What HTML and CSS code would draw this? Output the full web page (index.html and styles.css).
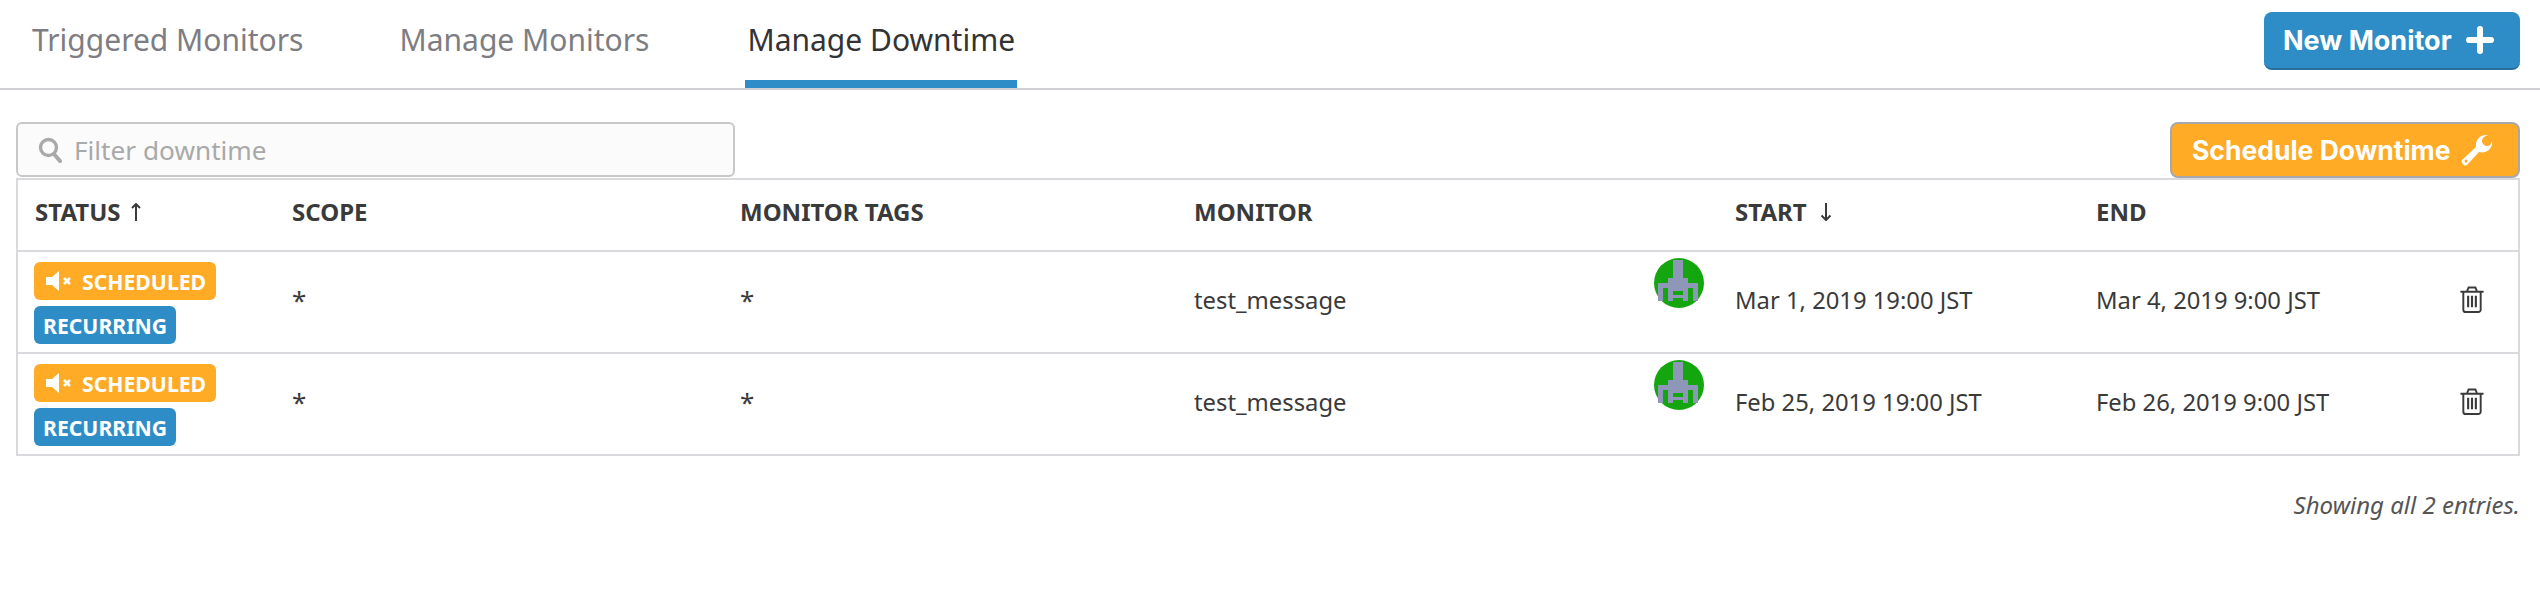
FILE: index.html
```html
<!DOCTYPE html>
<html lang="en">
<head>
    <meta charset="UTF-8">
    <title>Manage Downtime</title>
    <link rel="stylesheet" href="styles.css">
</head>
<body>
    <div class="top-bar">
        <nav class="tabs">
            <a class="tab">Triggered Monitors</a>
            <a class="tab">Manage Monitors</a>
            <a class="tab active">Manage Downtime</a>
        </nav>
        <button class="btn btn-new">New Monitor
            <svg class="btn-icon" width="28" height="28" viewBox="0 0 28 28"><path d="M11 3a3 3 0 0 1 6 0v8h8a3 3 0 0 1 0 6h-8v8a3 3 0 0 1-6 0v-8H3a3 3 0 0 1 0-6h8z" fill="#fff"/></svg>
        </button>
    </div>

    <div class="content">
        <div class="toolbar">
            <div class="filter">
                <svg class="filter-icon" width="24" height="26" viewBox="0 0 24 26"><circle cx="10.5" cy="10.5" r="8" fill="none" stroke="#a9a9a9" stroke-width="3.4"/><path d="M16 17l6 7" stroke="#a9a9a9" stroke-width="4" stroke-linecap="round"/></svg>
                <span>Filter downtime</span>
            </div>
            <button class="btn btn-schedule">Schedule Downtime
                <svg class="btn-icon" width="32" height="32" viewBox="0 0 32 32"><path d="M1 26L15 13C14 6 19 0 27 1c-3 1-6 3-6 6 0 3 3 5 5 5 3 0 4-2 5-5 1 8-6 13-13 11L6 31c-2 2-7-3-5-5z" fill="#fff"/><circle cx="5" cy="27" r="1.500" fill="#ffab26"/></svg>
            </button>
        </div>

        <table class="downtimes">
            <thead>
                <tr>
                    <th class="col-status">STATUS
                        <svg class="sort sort-near" width="10" height="18" viewBox="0 0 10 18"><path d="M5 18V1M1 5l4-4 4 4" fill="none" stroke="#3a3a3a" stroke-width="2"/></svg>
                    </th>
                    <th class="col-scope">SCOPE</th>
                    <th class="col-tags">MONITOR TAGS</th>
                    <th class="col-monitor">MONITOR</th>
                    <th class="col-start">START
                        <svg class="sort" width="12" height="18" viewBox="0 0 12 18"><path d="M6 0v17M1.500 12.500L6 17l4.500-4.500" fill="none" stroke="#3a3a3a" stroke-width="2"/></svg>
                    </th>
                    <th class="col-end">END</th>
                    <th class="col-action"></th>
                </tr>
            </thead>
            <tbody>
                <tr>
                    <td class="status-cell">
                        <span class="badge badge-scheduled">
                            <svg class="mute" width="27" height="20" viewBox="0 0 27 20"><path d="M0 6h6l7-6v20l-7-6H0z" fill="#fff"/><path d="M18 7l6 6M24 7l-6 6" stroke="#fff" stroke-width="2.600"/></svg>
                            SCHEDULED
                        </span>
                        <span class="badge badge-recurring">RECURRING</span>
                    </td>
                    <td class="star">*</td>
                    <td class="star">*</td>
                    <td class="monitor-cell">test_message
                        <svg class="avatar" width="50" height="50" viewBox="0 0 50 50"><circle cx="25" cy="25" r="25" fill="#14a60f"/><path d="M19 2h10v18h5v5h10v18h-5V30h-5v13h-5v-3H19v3h-5V30H9v13H4V25h10v-5h5zM19 33v4h10v-4z" fill="#8f97b8" fill-rule="evenodd"/></svg>
                    </td>
                    <td>Mar 1, 2019 19:00 JST</td>
                    <td>Mar 4, 2019 9:00 JST</td>
                    <td class="action-cell">
                        <svg class="trash" width="24" height="27" viewBox="0 0 24 28"><g fill="none" stroke="#3a3a3a" stroke-width="2"><path d="M0 6h24M7 5l1.500-3.500h7L17 5M3 6v18.500a2.500 2.500 0 0 0 2.500 2.500h13a2.500 2.500 0 0 0 2.500-2.500V6"/><path d="M8 10v12M12 10v12M16 10v12" stroke-width="2.200"/></g></svg>
                    </td>
                </tr>
                <tr>
                    <td class="status-cell">
                        <span class="badge badge-scheduled">
                            <svg class="mute" width="27" height="20" viewBox="0 0 27 20"><path d="M0 6h6l7-6v20l-7-6H0z" fill="#fff"/><path d="M18 7l6 6M24 7l-6 6" stroke="#fff" stroke-width="2.600"/></svg>
                            SCHEDULED
                        </span>
                        <span class="badge badge-recurring">RECURRING</span>
                    </td>
                    <td class="star">*</td>
                    <td class="star">*</td>
                    <td class="monitor-cell">test_message
                        <svg class="avatar" width="50" height="50" viewBox="0 0 50 50"><circle cx="25" cy="25" r="25" fill="#14a60f"/><path d="M19 2h10v18h5v5h10v18h-5V30h-5v13h-5v-3H19v3h-5V30H9v13H4V25h10v-5h5zM19 33v4h10v-4z" fill="#8f97b8" fill-rule="evenodd"/></svg>
                    </td>
                    <td>Feb 25, 2019 19:00 JST</td>
                    <td>Feb 26, 2019 9:00 JST</td>
                    <td class="action-cell">
                        <svg class="trash" width="24" height="27" viewBox="0 0 24 28"><g fill="none" stroke="#3a3a3a" stroke-width="2"><path d="M0 6h24M7 5l1.500-3.500h7L17 5M3 6v18.500a2.500 2.500 0 0 0 2.500 2.500h13a2.500 2.500 0 0 0 2.500-2.500V6"/><path d="M8 10v12M12 10v12M16 10v12" stroke-width="2.200"/></g></svg>
                    </td>
                </tr>
            </tbody>
        </table>

        <p class="entries">Showing all 2 entries.</p>
    </div>
</body>
</html>
```

FILE: styles.css
```css
* {
    margin: 0;
    padding: 0;
    box-sizing: border-box;
}

body {
    font-family: "Noto Sans", sans-serif;
    background-color: #fff;
    color: #3a3a3a;
}

.top-bar {
    display: flex;
    justify-content: space-between;
    align-items: flex-start;
    height: 90px;
    padding: 12px 20px 0 32px;
    border-bottom: 2px solid #d0d0d5;
}

.tabs {
    display: flex;
    gap: 96px;
    height: 76px;
}

.tab {
    font-size: 30px;
    line-height: 56px;
    height: 76px;
    color: #7d7d82;
}

.tab.active {
    color: #333;
    border-bottom: 8px solid #2e8dc6;
    padding: 0 2px;
}

.btn {
    display: flex;
    align-items: center;
    font-family: Inter, sans-serif;
    font-size: 27px;
    font-weight: 700;
    color: #fff;
    border-radius: 8px;
}

.btn-new {
    width: 256px;
    height: 58px;
    gap: 14px;
    padding-left: 19px;
    background-color: #2e8dc6;
    border: none;
    border-bottom: 2px solid #25709e;
}

.btn-schedule {
    width: 350px;
    height: 56px;
    gap: 10px;
    padding-left: 20px;
    font-size: 26.5px;
    background-color: #ffab26;
    border: 2px solid #a8a8a8;
}

.content {
    padding: 32px 20px 0 16px;
}

.toolbar {
    display: flex;
    justify-content: space-between;
    align-items: flex-start;
    height: 56px;
}

.filter {
    display: flex;
    align-items: center;
    gap: 12px;
    width: 719px;
    height: 55px;
    padding-left: 20px;
    background-color: #fbfbfb;
    border: 2px solid #c8c8c8;
    border-radius: 6px;
    font-size: 26.2px;
    color: #a9a9a9;
}

.downtimes {
    width: 100%;
    table-layout: fixed;
    border-collapse: collapse;
    border: 2px solid #d9d9de;
    font-size: 23.8px;
}

.downtimes th {
    height: 72px;
    text-align: left;
    font-size: 24px;
    font-weight: 700;
    padding: 0 0 7px 17px;
    border-bottom: 2px solid #d9d9de;
}

.downtimes td {
    height: 102px;
    padding: 0 0 4px 17px;
    border-bottom: 2px solid #d9d9de;
    vertical-align: middle;
}

.downtimes .status-cell {
    padding: 2px 0 0 16px;
}

.col-status { width: 258px; }
.col-scope { width: 448px; }
.col-tags { width: 454px; }
.col-monitor { width: 541px; }
.col-start { width: 361px; }
.col-end { width: 346px; }

.sort {
    margin-left: 7px;
}

.sort-near {
    margin-left: 4px;
}

.badge {
    display: flex;
    align-items: center;
    width: fit-content;
    height: 38px;
    padding: 0 9px;
    border-radius: 6px;
    color: #fff;
    font-size: 21.2px;
    font-weight: 700;
}

.badge-scheduled {
    background-color: #ffab26;
    gap: 9px;
    padding: 0 10px 0 12px;
    margin-bottom: 6px;
}

.badge-recurring {
    background-color: #2e8dc6;
}

.star {
    font-size: 26px;
}

.monitor-cell {
    position: relative;
}

.avatar {
    position: absolute;
    top: 6px;
    right: 14px;
}

.trash {
    display: block;
}

.downtimes .action-cell {
    padding-left: 35px;
    padding-bottom: 6px;
}

.entries {
    margin-top: 32px;
    text-align: right;
    font-size: 24px;
    font-style: italic;
    color: #555;
}
```
